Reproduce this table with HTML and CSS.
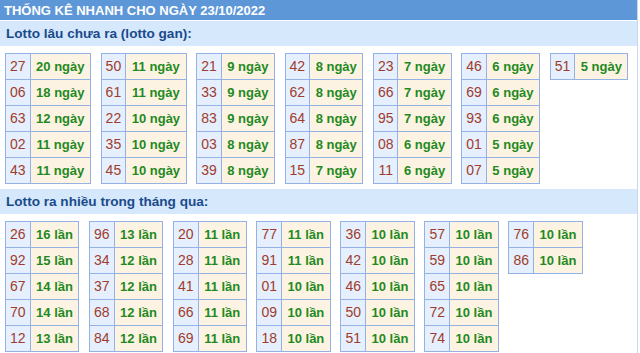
FILE: index.html
```html
<!DOCTYPE html>
<html lang="vi">
<head>
<meta charset="utf-8">
<title>Thống kê nhanh</title>
<link rel="stylesheet" href="styles.css">
</head>
<body>
<div class="box">
  <div class="title">THỐNG KÊ NHANH CHO NGÀY 23/10/2022</div>

  <div class="subtitle">Lotto lâu chưa ra (lotto gan):</div>
  <div class="groups">
    <table class="tk"><tr><td class="n">27</td><td class="v">20 ngày</td></tr><tr><td class="n">06</td><td class="v">18 ngày</td></tr><tr><td class="n">63</td><td class="v">12 ngày</td></tr><tr><td class="n">02</td><td class="v">11 ngày</td></tr><tr><td class="n">43</td><td class="v">11 ngày</td></tr></table>
    <table class="tk"><tr><td class="n">50</td><td class="v">11 ngày</td></tr><tr><td class="n">61</td><td class="v">11 ngày</td></tr><tr><td class="n">22</td><td class="v">10 ngày</td></tr><tr><td class="n">35</td><td class="v">10 ngày</td></tr><tr><td class="n">45</td><td class="v">10 ngày</td></tr></table>
    <table class="tk"><tr><td class="n">21</td><td class="v">9 ngày</td></tr><tr><td class="n">33</td><td class="v">9 ngày</td></tr><tr><td class="n">83</td><td class="v">9 ngày</td></tr><tr><td class="n">03</td><td class="v">8 ngày</td></tr><tr><td class="n">39</td><td class="v">8 ngày</td></tr></table>
    <table class="tk"><tr><td class="n">42</td><td class="v">8 ngày</td></tr><tr><td class="n">62</td><td class="v">8 ngày</td></tr><tr><td class="n">64</td><td class="v">8 ngày</td></tr><tr><td class="n">87</td><td class="v">8 ngày</td></tr><tr><td class="n">15</td><td class="v">7 ngày</td></tr></table>
    <table class="tk"><tr><td class="n">23</td><td class="v">7 ngày</td></tr><tr><td class="n">66</td><td class="v">7 ngày</td></tr><tr><td class="n">95</td><td class="v">7 ngày</td></tr><tr><td class="n">08</td><td class="v">6 ngày</td></tr><tr><td class="n">11</td><td class="v">6 ngày</td></tr></table>
    <table class="tk"><tr><td class="n">46</td><td class="v">6 ngày</td></tr><tr><td class="n">69</td><td class="v">6 ngày</td></tr><tr><td class="n">93</td><td class="v">6 ngày</td></tr><tr><td class="n">01</td><td class="v">5 ngày</td></tr><tr><td class="n">07</td><td class="v">5 ngày</td></tr></table>
    <table class="tk"><tr><td class="n">51</td><td class="v">5 ngày</td></tr></table>
  </div>

  <div class="subtitle">Lotto ra nhiều trong tháng qua:</div>
  <div class="groups">
    <table class="tk"><tr><td class="n">26</td><td class="v">16 lần</td></tr><tr><td class="n">92</td><td class="v">15 lần</td></tr><tr><td class="n">67</td><td class="v">14 lần</td></tr><tr><td class="n">70</td><td class="v">14 lần</td></tr><tr><td class="n">12</td><td class="v">13 lần</td></tr></table>
    <table class="tk"><tr><td class="n">96</td><td class="v">13 lần</td></tr><tr><td class="n">34</td><td class="v">12 lần</td></tr><tr><td class="n">37</td><td class="v">12 lần</td></tr><tr><td class="n">68</td><td class="v">12 lần</td></tr><tr><td class="n">84</td><td class="v">12 lần</td></tr></table>
    <table class="tk"><tr><td class="n">20</td><td class="v">11 lần</td></tr><tr><td class="n">28</td><td class="v">11 lần</td></tr><tr><td class="n">41</td><td class="v">11 lần</td></tr><tr><td class="n">66</td><td class="v">11 lần</td></tr><tr><td class="n">69</td><td class="v">11 lần</td></tr></table>
    <table class="tk"><tr><td class="n">77</td><td class="v">11 lần</td></tr><tr><td class="n">91</td><td class="v">11 lần</td></tr><tr><td class="n">01</td><td class="v">10 lần</td></tr><tr><td class="n">09</td><td class="v">10 lần</td></tr><tr><td class="n">18</td><td class="v">10 lần</td></tr></table>
    <table class="tk"><tr><td class="n">36</td><td class="v">10 lần</td></tr><tr><td class="n">42</td><td class="v">10 lần</td></tr><tr><td class="n">46</td><td class="v">10 lần</td></tr><tr><td class="n">50</td><td class="v">10 lần</td></tr><tr><td class="n">51</td><td class="v">10 lần</td></tr></table>
    <table class="tk"><tr><td class="n">57</td><td class="v">10 lần</td></tr><tr><td class="n">59</td><td class="v">10 lần</td></tr><tr><td class="n">65</td><td class="v">10 lần</td></tr><tr><td class="n">72</td><td class="v">10 lần</td></tr><tr><td class="n">74</td><td class="v">10 lần</td></tr></table>
    <table class="tk"><tr><td class="n">76</td><td class="v">10 lần</td></tr><tr><td class="n">86</td><td class="v">10 lần</td></tr></table>
  </div>
</div>
</body>
</html>
```

FILE: styles.css
```css
html, body {
  margin: 0;
  padding: 0;
  background: #fff;
}

.box {
  width: 637px;
  min-height: 353px;
  border-right: 1px solid #c9d9ea;
  font-family: "Liberation Sans", Arial, sans-serif;
}

.title {
  height: 20px;
  line-height: 21px;
  padding-left: 4px;
  background: #5e97d8;
  color: #fff;
  font-size: 13px;
  font-weight: bold;
  margin-bottom: 1px;
}

.subtitle {
  height: 25px;
  line-height: 25px;
  padding-left: 6px;
  background: #d6e8fb;
  color: #1a4a8c;
  font-size: 13.6px;
  font-weight: bold;
}

.groups {
  display: flex;
  align-items: flex-start;
  gap: 9.6px;
  padding: 7px 5px 5px 5px;
}

.tk {
  border-collapse: collapse;
  font-size: 14px;
}

.tk td {
  border: 1px solid #94b2e6;
  height: 25px;
  padding: 0 4px;
  line-height: 25px;
  white-space: nowrap;
}

.tk .n {
  background: #e5effd;
  color: #a03c2b;
  text-align: center;
}

.tk .v {
  background: #fdf3e2;
  color: #1f8a1f;
  font-size: 13px;
  font-weight: bold;
  text-align: center;
  padding: 0 5.5px;
}
```
